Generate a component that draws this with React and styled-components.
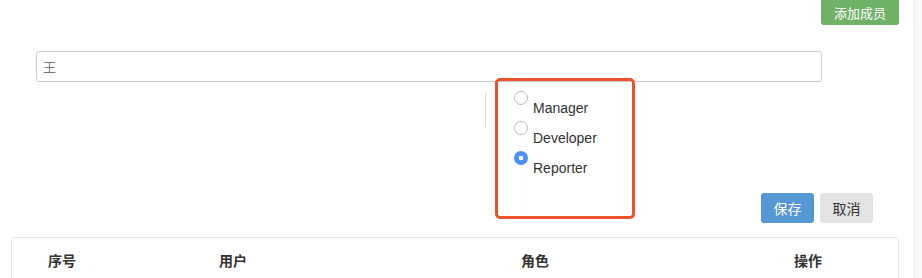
import React, { useState } from 'react';
import styled, { createGlobalStyle } from 'styled-components';

const GlobalStyle = createGlobalStyle`
  html, body {
    margin: 0;
    padding: 0;
    background: #fff;
    font-family: "Liberation Sans", "Noto Sans CJK SC", sans-serif;
    color: #333;
    overflow: hidden;
  }
`;

const roles = ['Manager', 'Developer', 'Reporter'];
const columns = ['序号', '用户', '角色', '操作'];

function App() {
  const [role, setRole] = useState('Reporter');

  return (
    <Page>
      <GlobalStyle />
      <Main>
        <TopBar>
          <AddButton>添加成员</AddButton>
        </TopBar>

        <SearchInput defaultValue="王" />

        <RolesRow>
          <Spacer />
          <Divider />
          <RadioList>
            {roles.map((r) => (
              <RadioItem key={r}>
                <Radio
                  type="radio"
                  name="role"
                  checked={role === r}
                  onChange={() => setRole(r)}
                />
                <RadioText>{r}</RadioText>
              </RadioItem>
            ))}
          </RadioList>
        </RolesRow>

        <Actions>
          <Button primary>保存</Button>
          <Button>取消</Button>
        </Actions>

        <Table>
          <HeadRow>
            {columns.map((c) => (
              <HeadCell key={c}>{c}</HeadCell>
            ))}
          </HeadRow>
        </Table>

        <Highlight />
      </Main>
      <SideStrip />
    </Page>
  );
}
export default App;

const Page = styled.div`
  display: flex;
  height: 100vh;
  overflow: hidden;
`;

const Main = styled.div`
  position: relative;
  width: 914px;
  flex-shrink: 0;
  display: flex;
  flex-direction: column;
  & > * {
    flex-shrink: 0;
  }
`;

const SideStrip = styled.div`
  flex: 1;
  background: #fafafa;
  border-left: 1px solid #ebebeb;
`;

const TopBar = styled.div`
  display: flex;
  justify-content: flex-end;
  padding-right: 15px;
  height: 25px;
`;

const AddButton = styled.button`
  margin-top: -4px;
  width: 78px;
  height: 29px;
  border: 0;
  border-radius: 3px;
  background: #6fb166;
  color: #fff;
  font-family: inherit;
  font-size: 13px;
  padding: 3px 0 0;
`;

const SearchInput = styled.input`
  margin: 26px 0 0 36px;
  width: 786px;
  height: 31px;
  box-sizing: border-box;
  border: 1px solid #ccc;
  border-radius: 3px;
  padding: 0 6px;
  font-family: inherit;
  font-size: 13px;
  color: #777;
  outline: none;
`;

const RolesRow = styled.div`
  display: flex;
  margin-top: 8px;
`;

const Spacer = styled.div`
  width: 485px;
  flex-shrink: 0;
`;

const Divider = styled.div`
  width: 1px;
  height: 34px;
  margin-top: 3px;
  background: #ddd;
`;

const RadioList = styled.div`
  display: flex;
  flex-direction: column;
  padding-left: 28px;
`;

const RadioItem = styled.label`
  display: flex;
  align-items: flex-start;
  height: 30px;
  box-sizing: border-box;
  padding-top: 1px;
`;

const Radio = styled.input`
  appearance: none;
  margin: 0;
  width: 14px;
  height: 14px;
  border-radius: 50%;
  border: 1px solid #bdbdbd;
  background: #fff;
  box-sizing: border-box;
  &:checked {
    border: 0;
    background: radial-gradient(circle, #fff 0 2px, #4b8ef5 2.6px);
  }
`;

const RadioText = styled.span`
  margin: 7px 0 0 5px;
  font-size: 14px;
  line-height: 20px;
  color: #333;
`;

const Actions = styled.div`
  display: flex;
  justify-content: flex-end;
  gap: 6px;
  margin: 13px 41px 0 0;
`;

const Button = styled.button`
  width: 53px;
  height: 30px;
  border: 0;
  border-radius: 3px;
  font-family: inherit;
  font-size: 14px;
  background: ${(p) => (p.primary ? '#5596d5' : '#e3e3e3')};
  color: ${(p) => (p.primary ? '#fff' : '#333')};
`;

const Table = styled.div`
  margin: 14px 0 0 11px;
  width: 888px;
  border: 1px solid #e6e6e6;
  border-radius: 4px;
  box-sizing: border-box;
`;

const HeadRow = styled.div`
  display: grid;
  grid-template-columns: 171px 302px 273px 1fr;
  align-items: center;
  height: 44px;
  padding-left: 36px;
`;

const HeadCell = styled.div`
  font-size: 14px;
  font-weight: bold;
  color: #333;
`;

const Highlight = styled.div`
  position: absolute;
  left: 495px;
  top: 78px;
  width: 140px;
  height: 141px;
  box-sizing: border-box;
  border: 3px solid #ea5428;
  border-radius: 5px;
  pointer-events: none;
`;
